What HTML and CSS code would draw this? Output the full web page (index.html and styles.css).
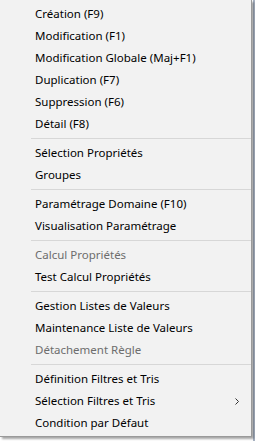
FILE: index.html
```html
<!DOCTYPE html>
<html>
<head>
<meta charset="utf-8">
<link rel="stylesheet" href="styles.css">
</head>
<body>
<div class="backdrop">
  <div class="menu">
    <div class="item">Création (F9)</div>
    <div class="item">Modification (F1)</div>
    <div class="item">Modification Globale (Maj+F1)</div>
    <div class="item">Duplication (F7)</div>
    <div class="item">Suppression (F6)</div>
    <div class="item">Détail (F8)</div>
    <div class="sep"></div>
    <div class="item">Sélection Propriétés</div>
    <div class="item">Groupes</div>
    <div class="sep"></div>
    <div class="item">Paramétrage Domaine (F10)</div>
    <div class="item">Visualisation Paramétrage</div>
    <div class="sep"></div>
    <div class="item disabled">Calcul Propriétés</div>
    <div class="item">Test Calcul Propriétés</div>
    <div class="sep"></div>
    <div class="item">Gestion Listes de Valeurs</div>
    <div class="item">Maintenance Liste de Valeurs</div>
    <div class="item disabled">Détachement Règle</div>
    <div class="sep"></div>
    <div class="item">Définition Filtres et Tris</div>
    <div class="item sub">Sélection Filtres et Tris<svg class="arrow" width="4" height="7" viewBox="0 0 4 7"><path d="M0.5 0.5 L3.5 3.5 L0.5 6.5" fill="none" stroke="#333" stroke-width="1"/></svg></div>
    <div class="item">Condition par Défaut</div>
  </div>
</div>
</body>
</html>
```

FILE: styles.css
```css
html, body {
  margin: 0;
  padding: 0;
  background: #ffffff;
}
.backdrop {
  width: 255px;
  height: 441px;
  overflow: hidden;
  background: linear-gradient(to right, transparent 253px, #a9b3c3 253px);
}
.menu {
  width: 251px;
  background: #f2f2f2;
  border-right: 1px solid #9a9a9a;
  border-bottom: 1px solid #9a9a9a;
  padding: 3px 0 2px 0;
  box-shadow: 2px 2px 2px rgba(0, 0, 0, 0.35);
  font-family: "Noto Sans", "Liberation Sans", sans-serif;
  font-size: 11.5px;
  color: #000;
}
.item {
  height: 22px;
  line-height: 22px;
  padding-left: 35px;
  display: flex;
  align-items: center;
  white-space: nowrap;
}
.item.disabled {
  color: #6d6d6d;
}
.item.sub {
  justify-content: space-between;
  padding-right: 12px;
}
.arrow {
  display: block;
}
.sep {
  height: 7px;
  margin-left: 31px;
  display: flex;
  align-items: center;
}
.sep::after {
  content: "";
  display: block;
  width: 100%;
  height: 1px;
  background: #d7d7d7;
}
```
